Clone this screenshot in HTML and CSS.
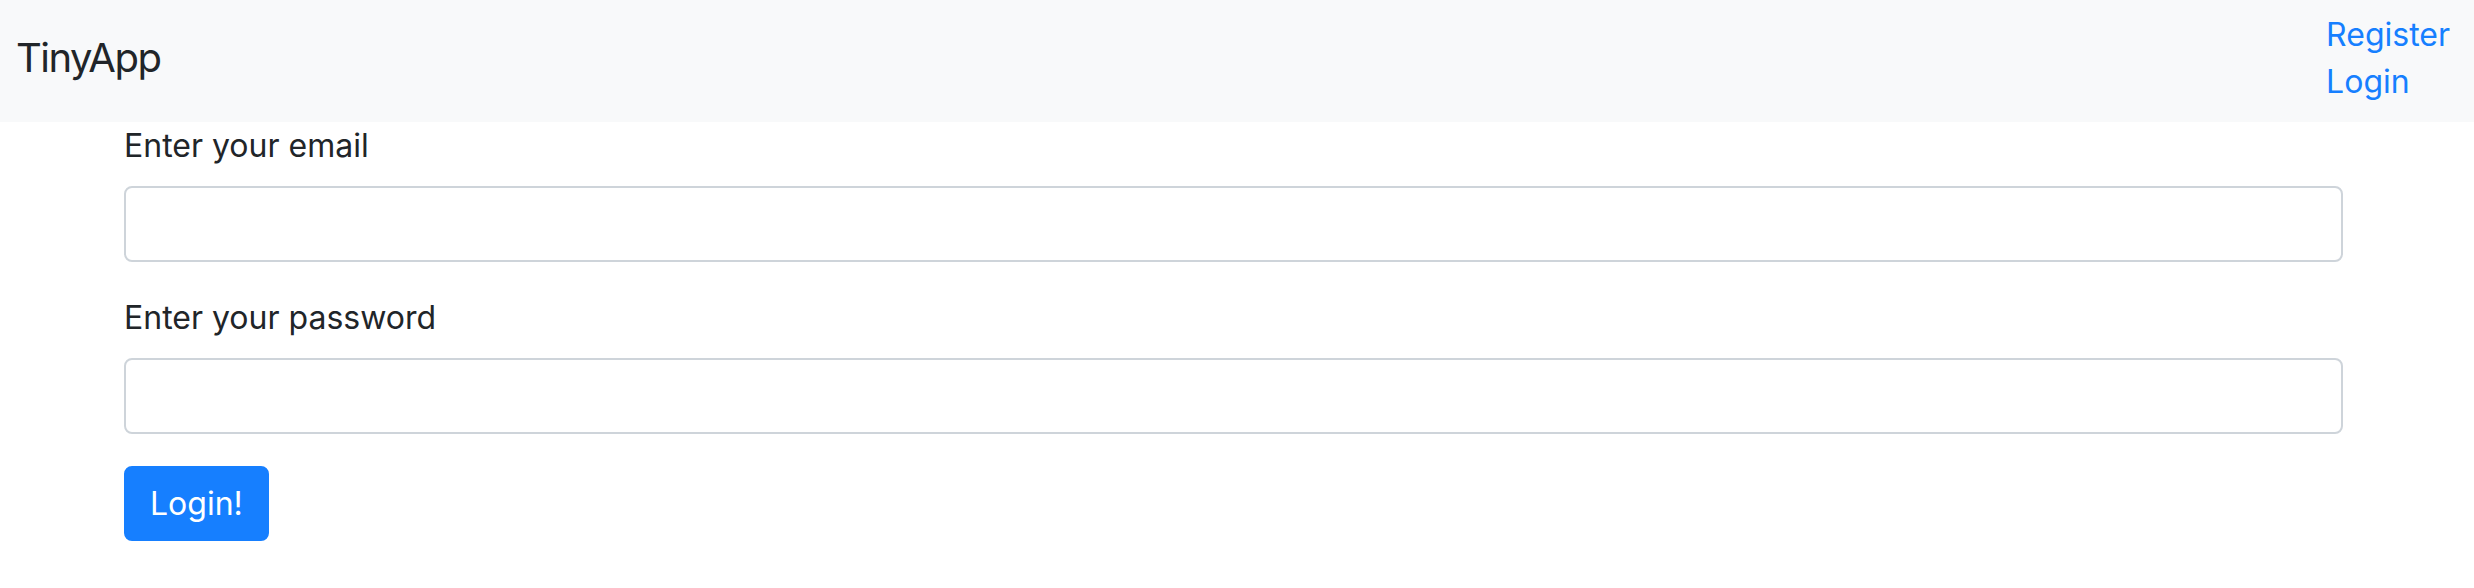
FILE: index.html
```html
<!DOCTYPE html>
<html lang="en">
<head>
<meta charset="utf-8">
<title>TinyApp</title>
<link rel="stylesheet" href="styles.css">
</head>
<body>
<nav class="navbar">
  <a class="brand" href="#">TinyApp</a>
  <ul class="nav-links">
    <li><a href="#">Register</a></li>
    <li><a href="#">Login</a></li>
  </ul>
</nav>
<main class="container">
  <form class="login-form">
    <div class="form-group">
      <label for="email">Enter your email</label>
      <input id="email" type="email" class="form-control">
    </div>
    <div class="form-group">
      <label for="password">Enter your password</label>
      <input id="password" type="password" class="form-control">
    </div>
    <button type="button" class="btn-primary">Login!</button>
  </form>
</main>
</body>
</html>
```
FILE: styles.css
```css
* { box-sizing: border-box; }
html, body { margin: 0; padding: 0; }
body {
  font-family: Inter, "Liberation Sans", Arial, sans-serif;
  font-size: 32px;
  line-height: 48px;
  color: #212529;
  background: #fff;
}
.navbar {
  display: flex;
  justify-content: space-between;
  align-items: center;
  height: 122px;
  padding: 10px 24px 16px 16px;
  background: #f8f9fa;
}
.brand {
  font-size: 40px;
  line-height: 60px;
  letter-spacing: -1.5px;
  color: #212529;
  text-decoration: none;
}
.nav-links {
  list-style: none;
  margin: 0;
  padding: 0;
  display: flex;
  flex-direction: column;
}
.nav-links a {
  color: #167fff;
  text-decoration: none;
  line-height: 47px;
  display: block;
}
.container {
  padding: 0 131px 0 124px;
}
.form-group {
  margin-bottom: 32px;
}
.form-group label {
  display: block;
  margin-bottom: 16px;
}
.form-control {
  display: block;
  width: 100%;
  height: 76px;
  border: 2px solid #ced4da;
  border-radius: 8px;
  background: #fff;
  font: inherit;
  padding: 12px 24px;
}
.btn-primary {
  font: inherit;
  color: #fff;
  background: #167fff;
  border: 2px solid #167fff;
  border-radius: 8px;
  padding: 12px 24px;
  line-height: 48px;
  height: 75px;
  cursor: pointer;
}
```
